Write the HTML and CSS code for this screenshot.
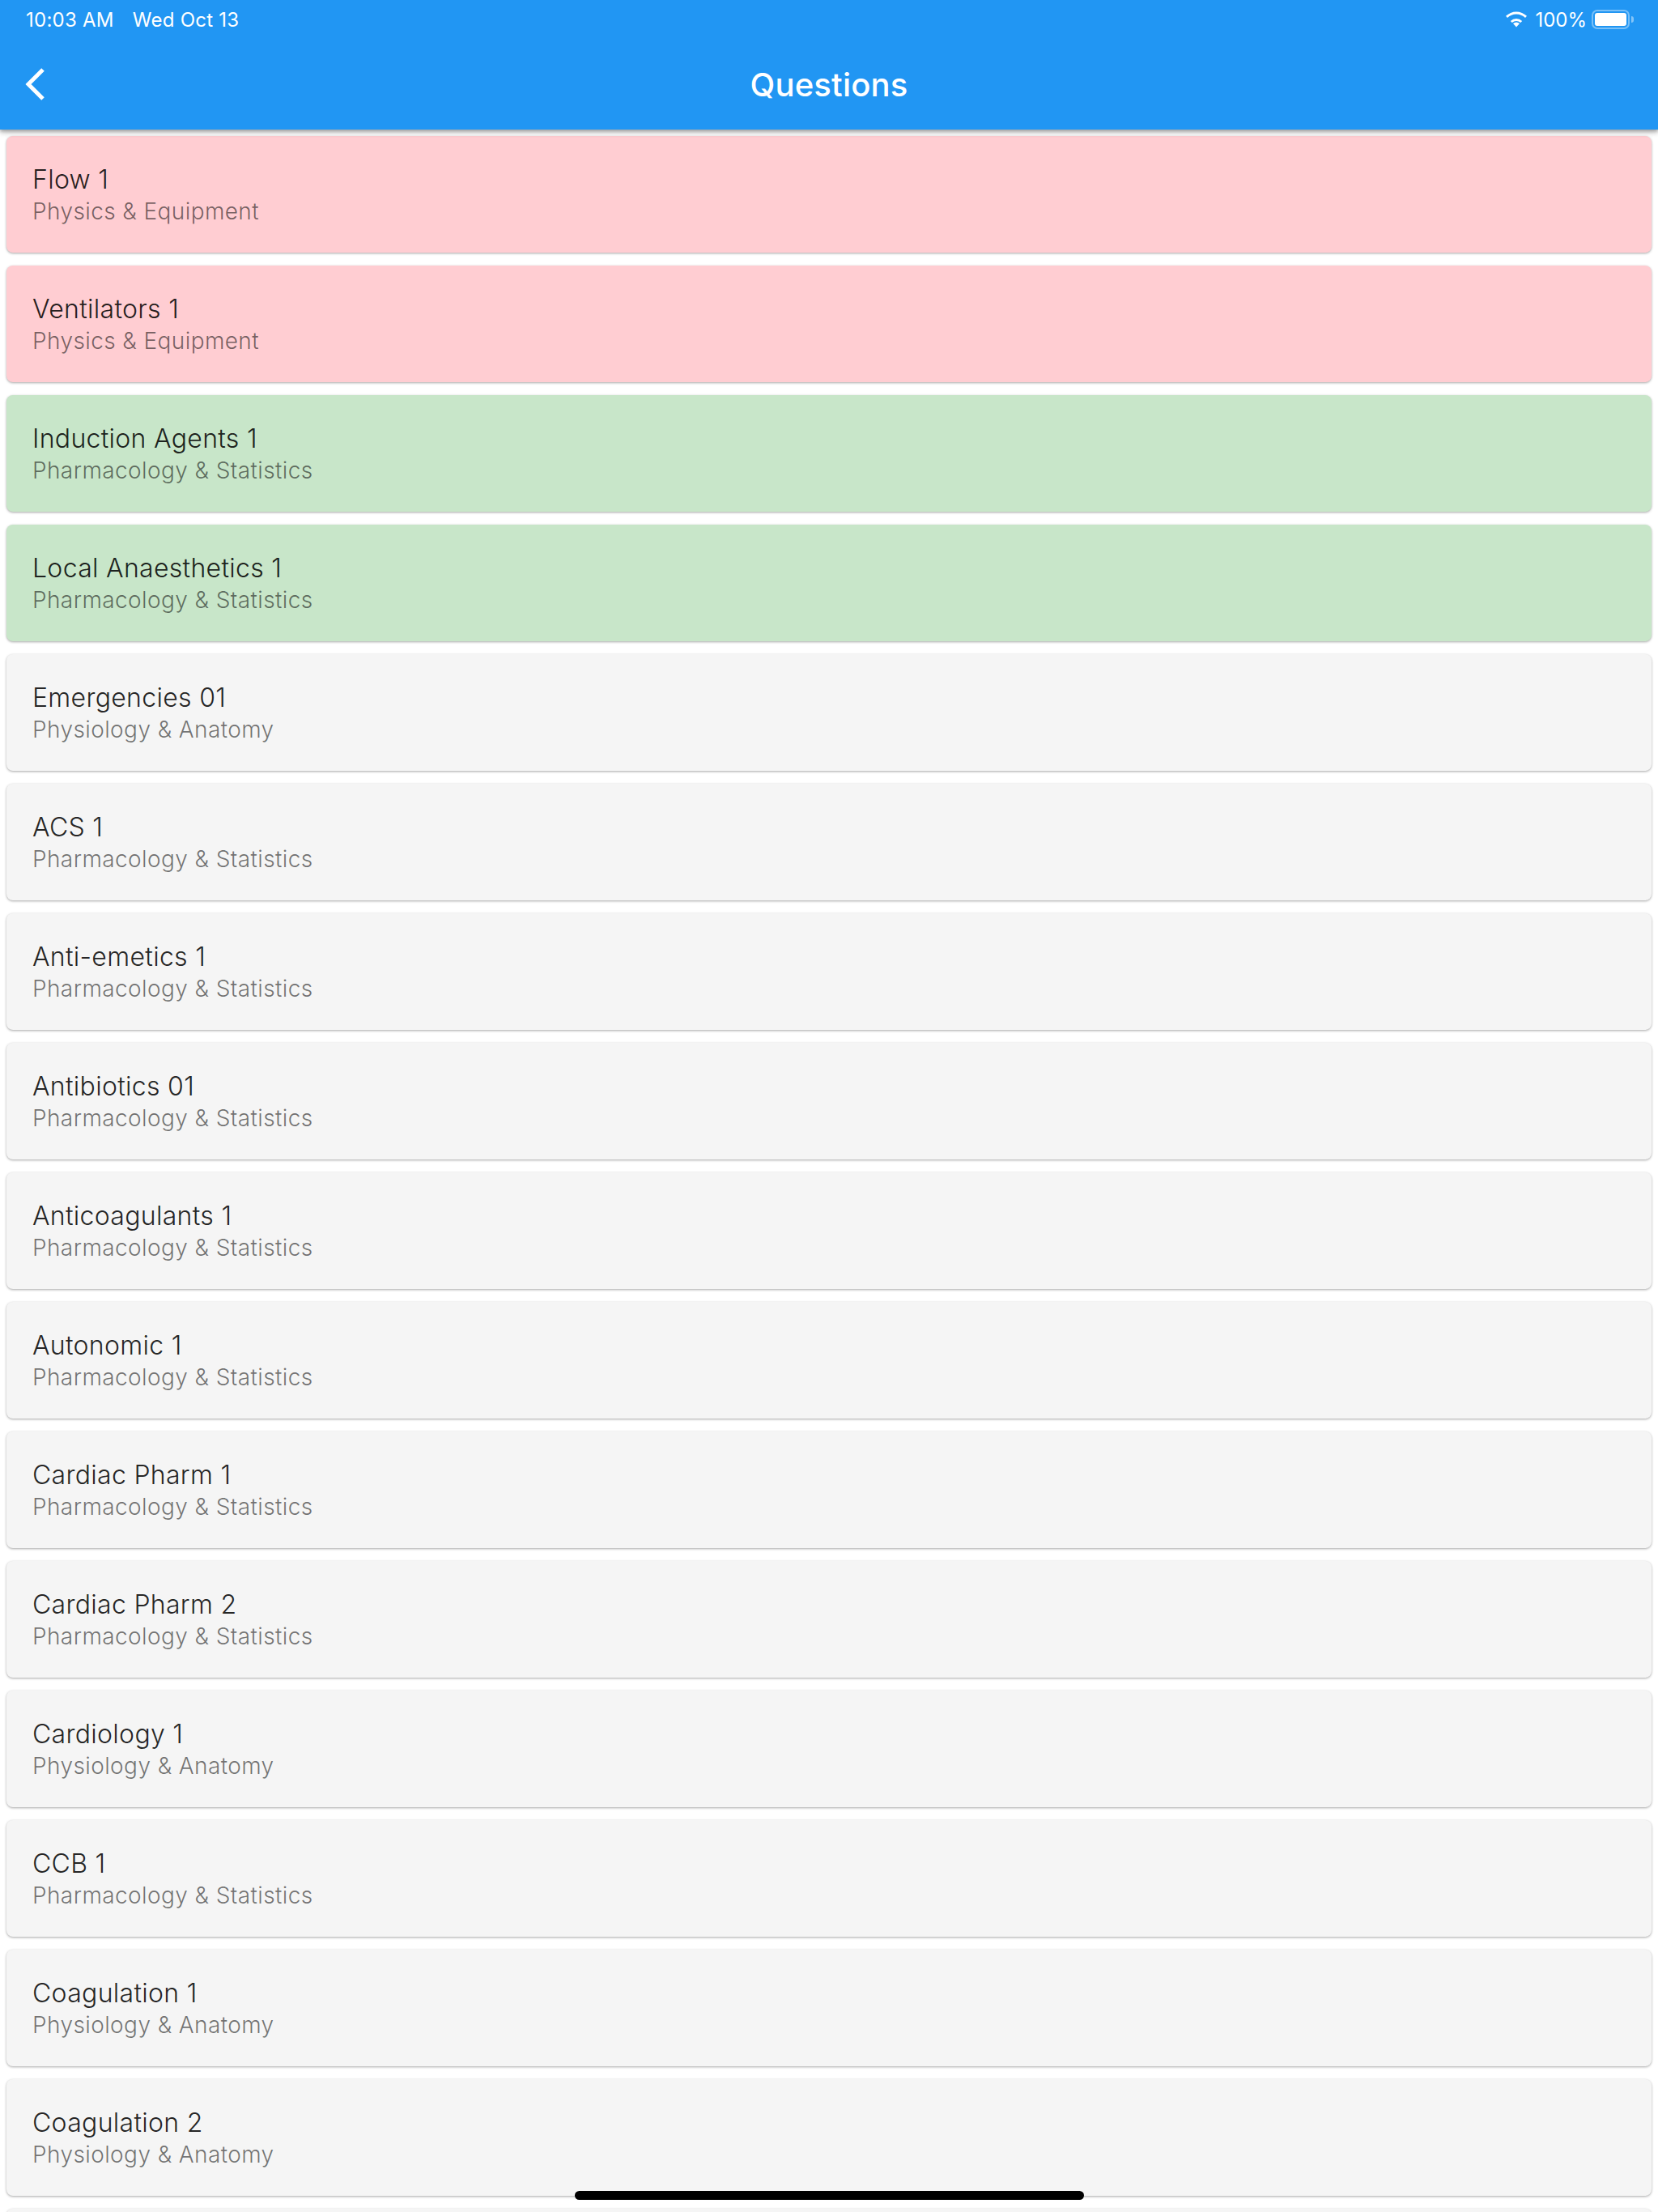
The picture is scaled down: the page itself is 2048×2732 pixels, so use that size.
FILE: index.html
```html
<!DOCTYPE html>
<html lang="en">
<head>
  <meta charset="UTF-8" />
  <title>Questions</title>
  <link rel="stylesheet" href="styles.css">
</head>
<body>
  <header class="app-bar">
    <div class="status-bar">
      <div class="status-left">
        <span>10:03 AM</span>
        <span>Wed Oct 13</span>
      </div>
      <div class="status-right">
        <svg class="wifi" width="28" height="22" viewBox="0 0 28 22">
          <path d="M14 20.500l-4-4.400a6 6 0 0 1 8 0z" fill="#fff"/>
          <path d="M6.800 12.900a10.500 10.500 0 0 1 14.400 0l-2 2.200a7.600 7.600 0 0 0-10.400 0z" fill="#fff"/>
          <path d="M1 6.800a18.800 18.800 0 0 1 26 0l-2 2.300a15.600 15.600 0 0 0-22 0z" fill="#fff"/>
        </svg>
        <span>100%</span>
        <div class="battery"><div class="battery-fill"></div></div>
        <div class="battery-tip"></div>
      </div>
    </div>
    <div class="toolbar">
      <svg class="back" width="26" height="42" viewBox="0 0 26 42">
        <path d="M23 3L5 21l18 18" fill="none" stroke="#fff" stroke-width="5"/>
      </svg>
      <h1>Questions</h1>
    </div>
  </header>

  <main class="list">
    <div class="card red"><p class="title">Flow 1</p><p class="sub">Physics &amp; Equipment</p></div>
    <div class="card red"><p class="title">Ventilators 1</p><p class="sub">Physics &amp; Equipment</p></div>
    <div class="card green"><p class="title">Induction Agents 1</p><p class="sub">Pharmacology &amp; Statistics</p></div>
    <div class="card green"><p class="title">Local Anaesthetics 1</p><p class="sub">Pharmacology &amp; Statistics</p></div>
    <div class="card"><p class="title">Emergencies 01</p><p class="sub">Physiology &amp; Anatomy</p></div>
    <div class="card"><p class="title">ACS 1</p><p class="sub">Pharmacology &amp; Statistics</p></div>
    <div class="card"><p class="title">Anti-emetics 1</p><p class="sub">Pharmacology &amp; Statistics</p></div>
    <div class="card"><p class="title">Antibiotics 01</p><p class="sub">Pharmacology &amp; Statistics</p></div>
    <div class="card"><p class="title">Anticoagulants 1</p><p class="sub">Pharmacology &amp; Statistics</p></div>
    <div class="card"><p class="title">Autonomic 1</p><p class="sub">Pharmacology &amp; Statistics</p></div>
    <div class="card"><p class="title">Cardiac Pharm 1</p><p class="sub">Pharmacology &amp; Statistics</p></div>
    <div class="card"><p class="title">Cardiac Pharm 2</p><p class="sub">Pharmacology &amp; Statistics</p></div>
    <div class="card"><p class="title">Cardiology 1</p><p class="sub">Physiology &amp; Anatomy</p></div>
    <div class="card"><p class="title">CCB 1</p><p class="sub">Pharmacology &amp; Statistics</p></div>
    <div class="card"><p class="title">Coagulation 1</p><p class="sub">Physiology &amp; Anatomy</p></div>
    <div class="card"><p class="title">Coagulation 2</p><p class="sub">Physiology &amp; Anatomy</p></div>
    <div class="card"></div>
  </main>

  <div class="home-bar"></div>
</body>
</html>
```

FILE: styles.css
```css
html, body {
  margin: 0;
  height: 2732px;
  overflow: hidden;
  background-color: #fff;
  font-family: Inter, "Noto Sans", sans-serif;
}
.app-bar {
  position: relative;
  z-index: 2;
  height: 160px;
  background-color: #2196f3;
  color: #fff;
  box-shadow: 0 2px 4px rgba(0,0,0,0.22), 0 4px 6px rgba(0,0,0,0.16), 0 1px 10px rgba(0,0,0,0.12);
}
.status-bar {
  height: 48px;
  padding: 0 30px 0 32px;
  display: flex;
  justify-content: space-between;
  align-items: center;
  font-size: 24px;
}
.status-left {
  display: flex;
  gap: 23px;
  letter-spacing: 0.25px;
}
.status-right {
  display: flex;
  align-items: center;
}
.wifi {
  margin-right: 9px;
}
.battery {
  width: 47px;
  height: 24px;
  margin-left: 6px;
  padding: 2px;
  box-sizing: border-box;
  border: 2px solid rgba(255,255,255,0.4);
  border-radius: 7px;
}
.battery-fill {
  height: 100%;
  background-color: #fff;
  border-radius: 3px;
}
.battery-tip {
  width: 3px;
  height: 8px;
  margin-left: 2px;
  background-color: rgba(255,255,255,0.45);
  border-radius: 0 3px 3px 0;
}
.toolbar {
  height: 112px;
  display: flex;
  align-items: center;
  justify-content: center;
  position: relative;
}
.toolbar h1 {
  margin: 0;
  font-size: 40px;
  font-weight: 500;
  letter-spacing: 0.2px;
}
.back {
  position: absolute;
  left: 30px;
  top: 35px;
}
.list {
  height: 2572px;
  box-sizing: border-box;
  overflow: hidden;
  padding: 8px;
  display: flex;
  flex-direction: column;
  gap: 16px;
}
.card {
  height: 144px;
  flex-shrink: 0;
  box-sizing: border-box;
  padding: 32px;
  background-color: #f5f5f5;
  border-radius: 8px;
  box-shadow: 0 1px 3px rgba(0,0,0,0.35);
}
.card.red {
  background-color: #ffcdd2;
}
.card.green {
  background-color: #c8e6c9;
}
.title {
  margin: 0;
  font-size: 32px;
  font-weight: 350;
  line-height: 43px;
  letter-spacing: 0.3px;
  color: rgba(0,0,0,0.87);
}
.sub {
  margin: 0;
  font-size: 28px;
  font-weight: 350;
  line-height: 36px;
  letter-spacing: 0.4px;
  color: rgba(0,0,0,0.54);
}
.home-bar {
  position: absolute;
  left: 710px;
  top: 2706px;
  width: 629px;
  height: 11px;
  background-color: #000;
  border-radius: 6px;
  z-index: 3;
}
```
